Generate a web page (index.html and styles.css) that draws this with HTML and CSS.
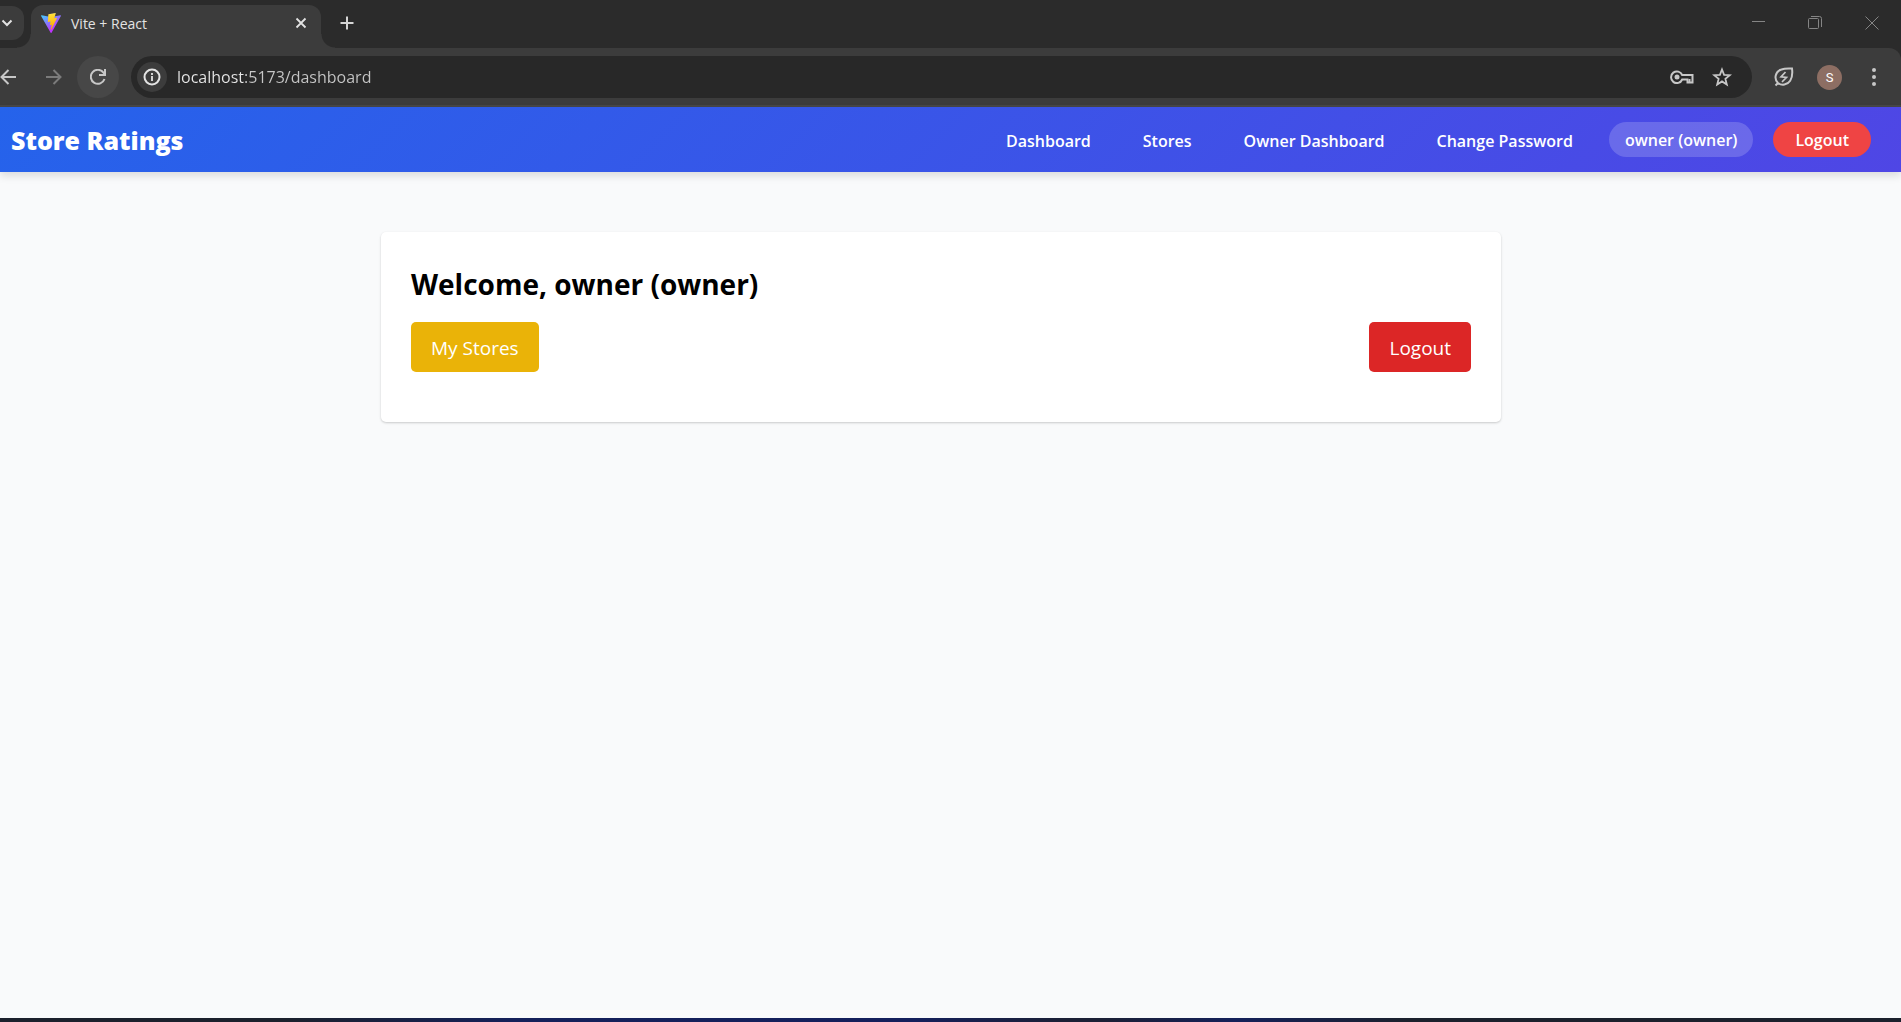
FILE: index.html
```html
<!DOCTYPE html>
<html lang="en">
<head>
<meta charset="utf-8">
<title>Vite + React</title>
<link rel="stylesheet" href="styles.css">
</head>
<body>
<div class="browser">
  <div class="tab-strip">
    <button class="tab-search" aria-label="Search tabs">
      <svg width="12" height="12" viewBox="0 0 12 12" fill="none" stroke="currentColor" stroke-width="2"><path d="M1.5 3.5 6 8l4.500-4.500"/></svg>
    </button>
    <div class="tab">
      <svg class="favicon" width="20" height="20" viewBox="0 0 256 257">
        <defs>
          <linearGradient id="v" x1="0" y1="0" x2=".57" y2=".8"><stop offset="0" stop-color="#41d1ff"/><stop offset="1" stop-color="#bd34fe"/></linearGradient>
          <linearGradient id="b" x1=".43" y1=".02" x2=".5" y2=".9"><stop offset="0" stop-color="#ffea83"/><stop offset=".08" stop-color="#ffdd35"/><stop offset="1" stop-color="#ffa800"/></linearGradient>
        </defs>
        <path fill="url(#v)" d="M255.153 37.938 134.897 252.976c-2.483 4.440-8.862 4.466-11.382.048L.875 37.958c-2.746-4.814 1.371-10.646 6.827-9.670l120.385 21.517a6.537 6.537 0 0 0 2.322-.004l117.867-21.483c5.438-.991 9.574 4.796 6.877 9.620Z"/>
        <path fill="url(#b)" d="M185.432.063 96.440 17.501a3.268 3.268 0 0 0-2.634 3.014l-5.474 92.456a3.268 3.268 0 0 0 3.997 3.378l24.777-5.718c2.318-.535 4.413 1.507 3.936 3.838l-7.361 36.047c-.495 2.426 1.782 4.500 4.151 3.780l15.304-4.649c2.372-.720 4.652 1.360 4.150 3.788l-11.698 56.621c-.732 3.542 3.979 5.473 5.943 2.437l1.313-2.028 72.516-144.720c1.215-2.423-.880-5.186-3.540-4.672l-25.505 4.922c-2.396.462-4.435-1.770-3.759-4.114l16.646-57.705c.677-2.350-1.370-4.583-3.769-4.113Z"/>
      </svg>
      <span class="tab-title">Vite + React</span>
      <button class="icon-button tab-close" aria-label="Close tab">
        <svg width="12" height="12" viewBox="0 0 12 12" stroke="currentColor" stroke-width="1.800"><path d="m1.500 1.500 9 9m0-9-9 9"/></svg>
      </button>
    </div>
    <button class="icon-button new-tab" aria-label="New tab">
      <svg width="14" height="14" viewBox="0 0 14 14" stroke="currentColor" stroke-width="2"><path d="M7 .5v13M.5 7h13"/></svg>
    </button>
    <div class="window-controls">
      <button class="icon-button" aria-label="Minimize"><svg width="14" height="14" viewBox="0 0 14 14" stroke="currentColor"><path d="M1 5.500h13"/></svg></button>
      <button class="icon-button" aria-label="Restore"><svg width="14" height="14" viewBox="0 0 14 14" fill="none" stroke="currentColor"><rect x=".5" y="2.500" width="10" height="10" rx="1"/><path d="M3 .5h8.500a2 2 0 0 1 2 2V11"/></svg></button>
      <button class="icon-button" aria-label="Close"><svg width="14" height="14" viewBox="0 0 14 14" stroke="currentColor"><path d="m.5.5 13 13m0-13-13 13"/></svg></button>
    </div>
  </div>
  <div class="toolbar">
    <div class="nav-buttons">
      <button class="icon-button" aria-label="Back"><svg width="16" height="16" viewBox="0 0 16 16" fill="none" stroke="currentColor" stroke-width="2"><path d="M16 8H2M8.500 1 1.500 8l7 7"/></svg></button>
      <button class="icon-button dim" aria-label="Forward"><svg width="16" height="16" viewBox="0 0 16 16" fill="none" stroke="currentColor" stroke-width="2"><path d="M0 8h14M7.500 1l7 7-7 7"/></svg></button>
      <button class="icon-button reload" aria-label="Reload"><svg width="16" height="16" viewBox="0 0 16 16" fill="none" stroke="currentColor" stroke-width="2"><path d="M14.500 10A7 7 0 1 1 13.500 3.700L15 5.500"/><path d="M15 0v6H9"/></svg></button>
    </div>
    <div class="address-bar">
      <button class="icon-button site-info" aria-label="Site information"><svg width="18" height="18" viewBox="0 0 18 18" fill="none" stroke="currentColor" stroke-width="2"><circle cx="9" cy="9" r="7.500"/><path d="M9 8v5M9 5v2" stroke-width="1.800"/></svg></button>
      <input class="url" type="text" aria-label="Address" value="localhost:5173/dashboard">
      <button class="icon-button" aria-label="Passwords"><svg width="24" height="14" viewBox="0 0 24 14" fill="none" stroke="currentColor" stroke-width="2"><path d="M12.200 5H22.500v7.500H17.500V9.500h-5.300A5.800 5.800 0 1 1 12.200 5Z"/><circle cx="7" cy="7" r="2.500" fill="currentColor" stroke="none"/><path d="M19.500 9v3"/></svg></button>
      <button class="icon-button" aria-label="Bookmark"><svg width="20" height="20" viewBox="0 0 20 20" fill="none" stroke="currentColor" stroke-width="1.800"><path d="m10 2.500 2.100 5.300 5.700.4-4.400 3.700 1.400 5.600L10 14.400l-4.800 3.100 1.400-5.600-4.400-3.700 5.700-.4Z"/></svg></button>
    </div>
    <div class="toolbar-actions">
      <button class="icon-button" aria-label="Energy saver"><svg width="20" height="20" viewBox="0 0 20 20" fill="none" stroke="currentColor" stroke-width="2"><path d="M1.500 18.500 4 16M4 16A8 8 0 0 1 7.500 2.500C11 1 15 1.500 18 1.500c.500 4 .8 8.500-1.800 12.300C13.500 18 7.500 19 4 16Z"/><path d="M11.500 5 7 9.800l5.500.6L8 15" stroke-width="1.700"/></svg></button>
      <button class="avatar" aria-label="Profile S">S</button>
      <button class="icon-button menu" aria-label="Menu"><svg width="6" height="18" viewBox="0 0 6 18" fill="currentColor"><circle cx="3" cy="2" r="2"/><circle cx="3" cy="9" r="2"/><circle cx="3" cy="16" r="2"/></svg></button>
    </div>
  </div>
</div>
<header class="site-header">
  <a class="brand" href="#">Store Ratings</a>
  <nav class="links">
    <a href="#">Dashboard</a>
    <a href="#">Stores</a>
    <a href="#">Owner Dashboard</a>
    <a href="#">Change Password</a>
  </nav>
  <span class="user">owner (owner)</span>
  <button class="logout-pill">Logout</button>
</header>
<main class="page">
  <section class="card">
    <h1>Welcome, owner (owner)</h1>
    <div class="actions">
      <button class="action stores">My Stores</button>
      <button class="action logout">Logout</button>
    </div>
  </section>
</main>
<footer class="taskbar"></footer>
</body>
</html>
```

FILE: styles.css
```css
* { box-sizing: border-box; }

body {
  margin: 0;
  min-height: 100vh;
  display: flex;
  flex-direction: column;
  background: #f9fafb;
  color: #000;
  font-family: "Open Sans", "Noto Sans", sans-serif;
}

button {
  border: 0;
  padding: 0;
  font-family: inherit;
  color: inherit;
  cursor: pointer;
}

a { color: inherit; text-decoration: none; }
svg { display: block; }

.browser { background: #2b2b2b; color: #c7c7c7; }

.tab-strip {
  display: flex;
  align-items: flex-start;
  height: 48px;
  padding-top: 5px;
}

.tab-search {
  width: 24px;
  height: 34px;
  margin: 1px 7px 0 0;
  padding-left: 1px;
  border-radius: 0 12px 12px 0;
  background: #3c3c3c;
  color: #e3e3e3;
}

.tab {
  position: relative;
  display: flex;
  align-items: center;
  width: 290px;
  height: 43px;
  padding: 0 14px 7px 10px;
  border-radius: 12px 12px 0 0;
  background: #3c3c3c;
  color: #e3e3e3;
}

.tab::before,
.tab::after {
  content: "";
  position: absolute;
  bottom: 0;
  width: 14px;
  height: 14px;
}

.tab::before {
  right: 100%;
  background: radial-gradient(circle at 0 0, transparent 13px, #3c3c3c 14px);
}

.tab::after {
  left: 100%;
  background: radial-gradient(circle at 100% 0, transparent 13px, #3c3c3c 14px);
}

.tab-title { flex: 1; margin-left: 10px; font-size: 14px; }

.icon-button {
  display: flex;
  align-items: center;
  justify-content: center;
  background: none;
}

.new-tab { margin: 11px 0 0 19px; color: #d5d5d5; }

.window-controls {
  display: flex;
  gap: 43px;
  margin: 11px 22px 0 auto;
  color: #858585;
}

.toolbar {
  display: flex;
  align-items: center;
  height: 59px;
  padding: 1px 24px 0 0;
  border-bottom: 2px solid #474747;
  border-top-right-radius: 12px;
  background: #3c3c3c;
}

.nav-buttons { display: flex; align-items: center; gap: 30px; }
.dim { color: #7b7b7b; }

.reload {
  width: 42px;
  height: 42px;
  margin-left: -15px;
  border-radius: 50%;
  background: #474747;
}

.address-bar {
  flex: 1;
  display: flex;
  align-items: center;
  gap: 18px;
  height: 42px;
  margin: 0 22px 0 12px;
  padding: 0 20px 0 6px;
  border-radius: 21px;
  background: #282828;
}

.site-info {
  width: 30px;
  height: 30px;
  border-radius: 50%;
  background: #3c3c3c;
  color: #e3e3e3;
}

.url {
  flex: 1;
  min-width: 0;
  margin-left: -8px;
  padding: 0;
  border: 0;
  outline: 0;
  background: linear-gradient(90deg, #e8e8e8 68px, #c7c7c7 68px);
  background-clip: text;
  color: transparent;
  font-family: inherit;
  font-size: 16px;
}

.toolbar-actions { display: flex; align-items: center; gap: 23px; }
.menu { margin-left: 6px; }

.avatar {
  width: 25px;
  height: 25px;
  border-radius: 50%;
  background: #8d6e63;
  color: #fff;
  font: 13px Roboto, sans-serif;
}

.site-header {
  position: relative;
  display: flex;
  align-items: center;
  height: 65px;
  padding: 0 30px 0 11px;
  background: linear-gradient(135deg, #2563eb, #4f46e5);
  box-shadow: 0 4px 8px rgba(0, 0, 0, .12);
  color: #fff;
  font-size: 16px;
  font-weight: 600;
}

.brand { padding-top: 1px; font-size: 25px; font-weight: 800; }

.links { display: flex; gap: 52px; margin: 0 36px 0 auto; padding-top: 2px; }

.user,
.logout-pill {
  height: 35px;
  border-radius: 18px;
  line-height: 37px;
}

.user {
  padding: 0 16px;
  margin-right: 20px;
  background: rgba(255, 255, 255, .18);
}

.logout-pill {
  padding: 0 22px;
  background: #ef4444;
  font-size: 16px;
  font-weight: 600;
}

.page { flex: 1; padding: 60px 19px 60px 0; }

.card {
  max-width: 1120px;
  margin: 0 auto;
  padding: 32px 30px 50px;
  border-radius: 5px;
  background: #fff;
  box-shadow: 0 1px 3px rgba(0, 0, 0, .1), 0 1px 2px rgba(0, 0, 0, .1);
}

h1 { margin: 0 0 18px; font-size: 28px; line-height: 40px; font-weight: 700; }

.actions { display: flex; justify-content: space-between; }

.action {
  height: 50px;
  padding: 1px 20px 0;
  border-radius: 5px;
  color: #fff;
  font-size: 19px;
}

.stores { background: #eab308; }
.logout { background: #dc2626; }

.taskbar {
  height: 4px;
  background: linear-gradient(90deg, #1b202c 15%, #14205a 27%, #141f5c 48%, #1b1f35 56%, #1b1f35 58%, #14205a 65%, #1b202c 74%);
}
```
